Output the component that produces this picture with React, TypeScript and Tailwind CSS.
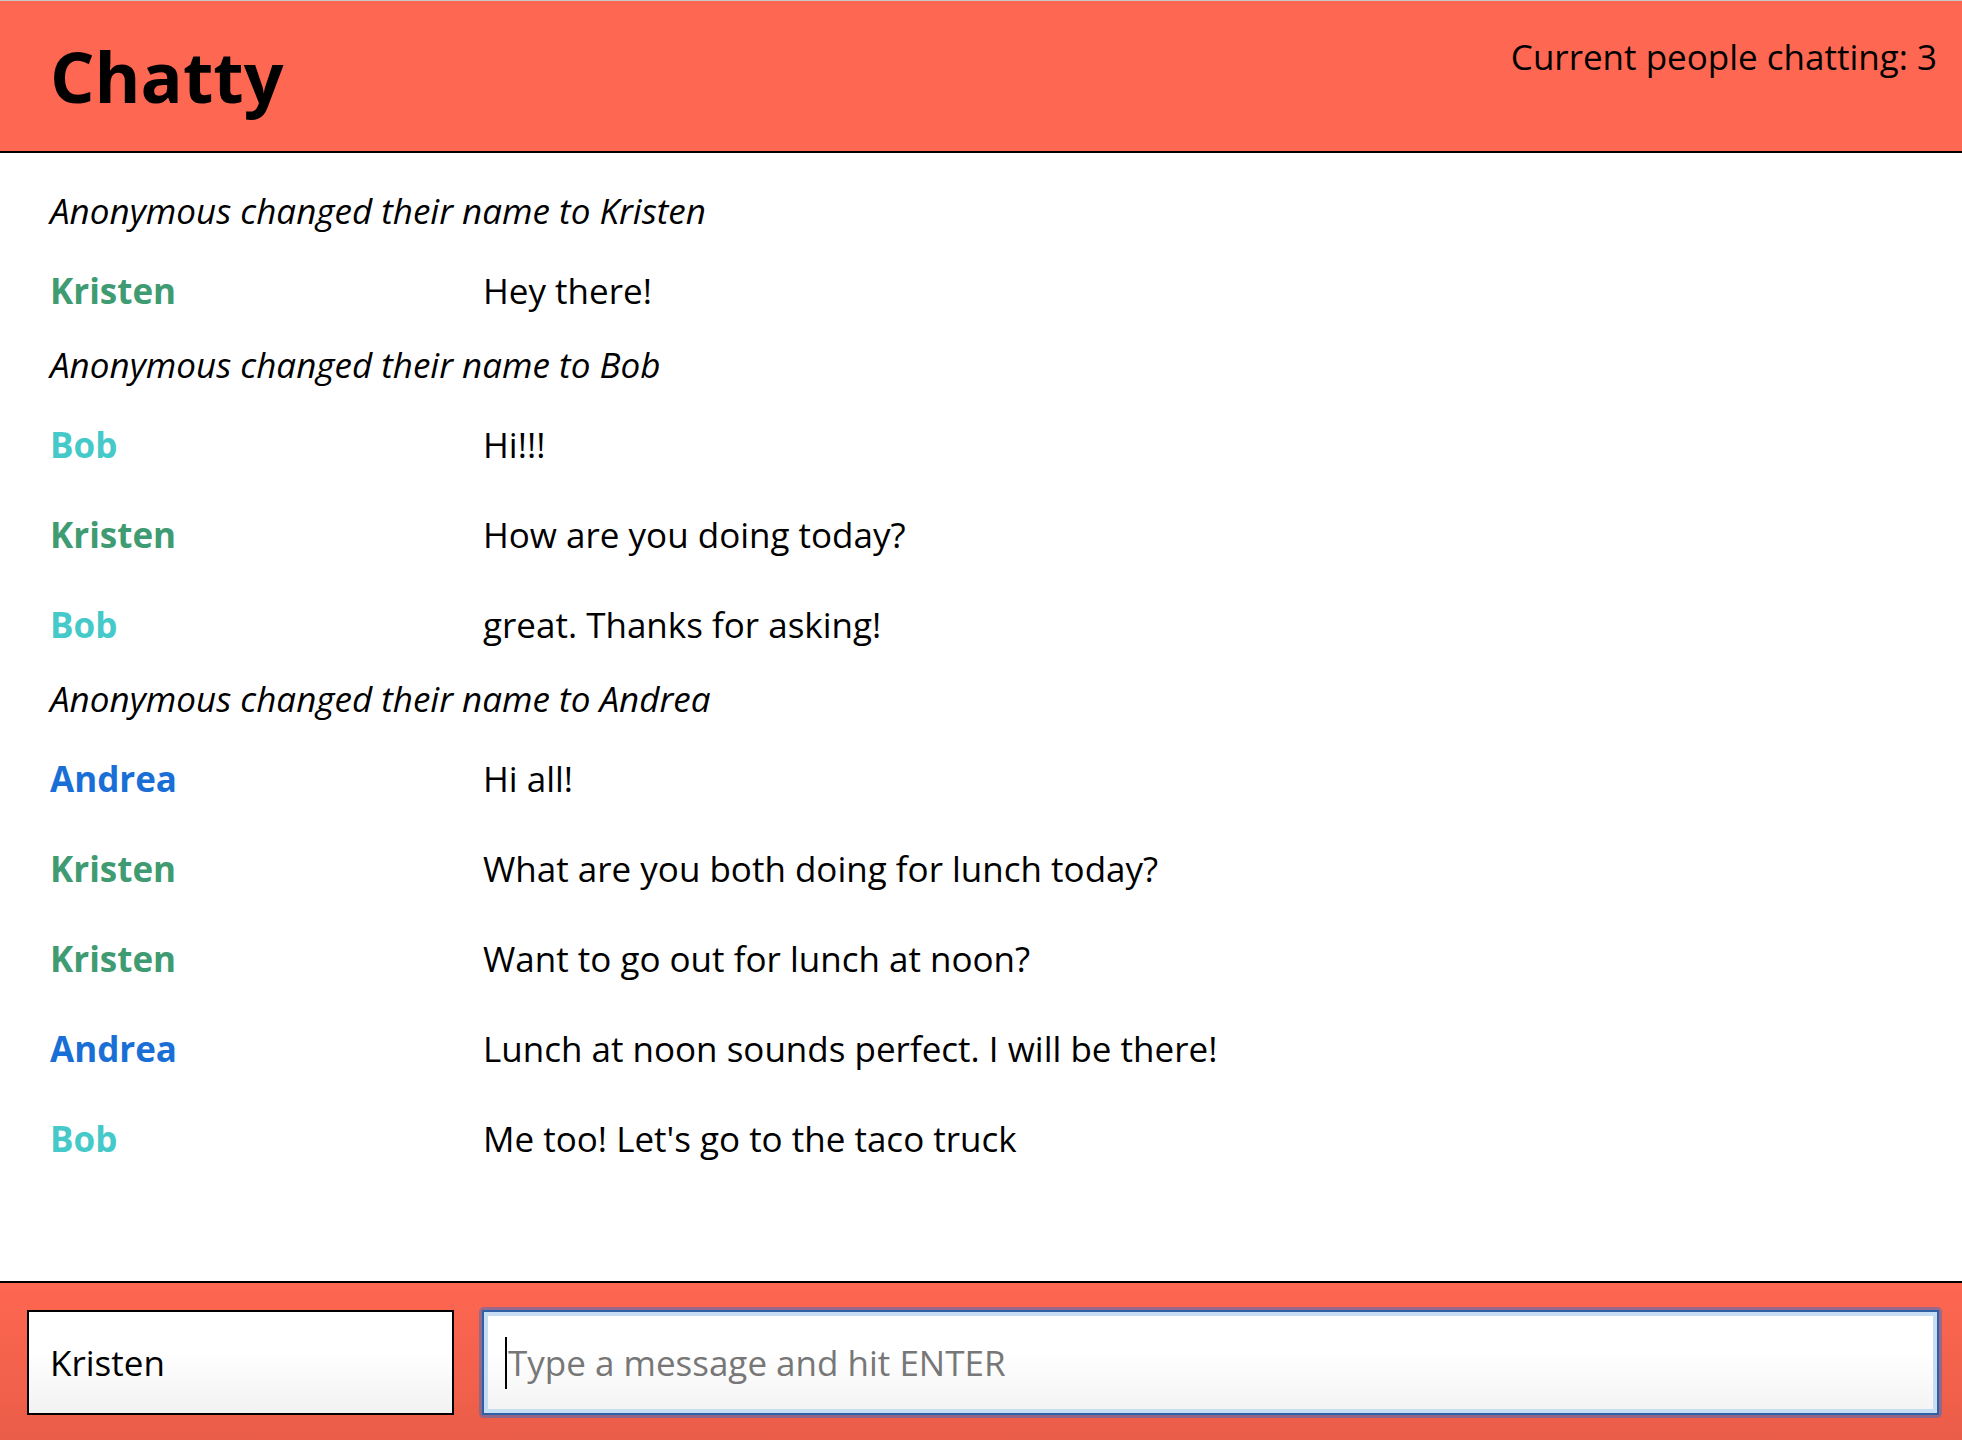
import React from "react";

type Row =
  | { kind: "notice"; text: string }
  | { kind: "msg"; user: "Kristen" | "Bob" | "Andrea"; text: string };

const rows: Row[] = [
  { kind: "notice", text: "Anonymous changed their name to Kristen" },
  { kind: "msg", user: "Kristen", text: "Hey there!" },
  { kind: "notice", text: "Anonymous changed their name to Bob" },
  { kind: "msg", user: "Bob", text: "Hi!!!" },
  { kind: "msg", user: "Kristen", text: "How are you doing today?" },
  { kind: "msg", user: "Bob", text: "great. Thanks for asking!" },
  { kind: "notice", text: "Anonymous changed their name to Andrea" },
  { kind: "msg", user: "Andrea", text: "Hi all!" },
  { kind: "msg", user: "Kristen", text: "What are you both doing for lunch today?" },
  { kind: "msg", user: "Kristen", text: "Want to go out for lunch at noon?" },
  { kind: "msg", user: "Andrea", text: "Lunch at noon sounds perfect. I will be there!" },
  { kind: "msg", user: "Bob", text: "Me too! Let's go to the taco truck" },
];

const userColor: Record<string, string> = {
  Kristen: "text-[#3f9b72]",
  Bob: "text-[#45c9c9]",
  Andrea: "text-[#1a6fd6]",
};

export default function App() {
  return (
    <div className="flex h-[1440px] w-full flex-col overflow-hidden bg-white font-['Open_Sans',sans-serif] text-black">
      <header className="flex h-[153px] shrink-0 items-start justify-between border-t border-t-[#c8c8c8] border-b-2 border-b-black bg-[#fe6751] pt-[40px] pl-[50px] pr-[25px]">
        <h1 className="text-[70px] font-bold leading-none">Chatty</h1>
        <span className="-mt-[2px] text-[35px] leading-none">Current people chatting: 3</span>
      </header>

      <main className="flex-1 pt-[28px]">
        {rows.map((r, i) =>
          r.kind === "notice" ? (
            <div key={i} className="flex h-[64px] items-center pb-[6px] pl-[50px] text-[35px] italic leading-none">
              {r.text}
            </div>
          ) : (
            <div key={i} className="flex h-[90px] items-center pl-[50px] text-[35px] leading-none">
              <span className={`w-[433px] shrink-0 font-bold ${userColor[r.user]}`}>{r.user}</span>
              <span>{r.text}</span>
            </div>
          )
        )}
      </main>

      <footer className="flex h-[159px] shrink-0 items-start gap-[28px] border-t-2 border-t-black bg-gradient-to-b from-[#fe6751] to-[#ea5d48] pt-[27px] pl-[27px] pr-[23px]">
        <input
          readOnly
          defaultValue="Kristen"
          className="h-[105px] w-[427px] shrink-0 border-2 border-black bg-gradient-to-b from-white from-40% to-[#f2f2f2] pl-[21px] text-[35px] text-black outline-none"
        />
        <div className="relative h-[105px] flex-1 rounded-[2px] shadow-[0_0_0_3px_rgba(70,110,190,0.55)]">
          <input
            readOnly
            placeholder="Type a message and hit ENTER"
            className="h-full w-full border-2 border-[#2e60a6] bg-gradient-to-b from-white from-40% to-[#f3f3f3] pl-[24px] text-[35px] text-black shadow-[inset_0_0_0_4px_#c6ddf4] outline-none placeholder:text-[#777777]"
          />
          <span className="pointer-events-none absolute left-[23px] top-[27px] h-[52px] w-[2px] bg-black" />
        </div>
      </footer>
    </div>
  );
}
